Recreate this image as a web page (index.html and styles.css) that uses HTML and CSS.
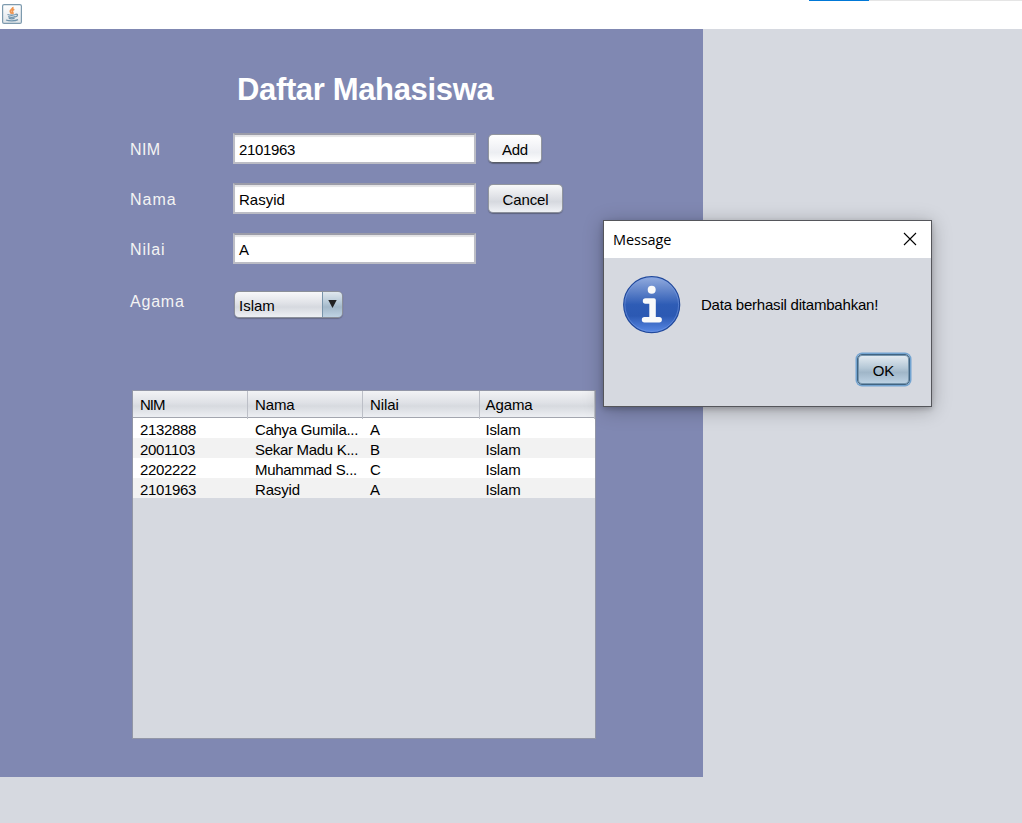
FILE: index.html
```
<!DOCTYPE html>
<html lang="id">
<head>
<meta charset="utf-8">
<title>Daftar Mahasiswa</title>
<link rel="stylesheet" href="styles.css">
</head>
<body>
<header class="titlebar">
  <svg class="java" width="20" height="20" viewBox="0 0 20 20">
    <defs><linearGradient id="jb" x1="0" y1="0" x2="0" y2="1"><stop offset="0" stop-color="#fff"/><stop offset="1" stop-color="#dfe4e8"/></linearGradient></defs>
    <rect x=".6" y=".6" width="18.8" height="18.8" rx="1.5" fill="url(#jb)" stroke="#7d9aae" stroke-width="1.2"/>
    <path d="M10.800 3c.8 2-3 2.800-2.500 4.600.2.900 1 1.400 1.400 2.200M12.300 5.300c-1.900 1-2.600 1.800-1.500 3.200.5.700 0 1.300-.3 1.600" fill="none" stroke="#ef944f" stroke-width="1.700"/>
    <path d="M5.500 10.500c2 .8 6 .8 8.300 0M6.200 12.700c2 .7 5 .7 7 0M13.600 10.200c2.600-.4 2.400 2.200-.4 2.700M6.800 14.400c2 .6 4 .6 5.800 0M4 16c3 1.200 9 1.200 12-.3" fill="none" stroke="#6f93ac" stroke-width="1.300"/>
  </svg>
  <div class="tabstrip"><span class="tab-active"></span></div>
</header>
<main class="panel">
  <h1 class="title">Daftar Mahasiswa</h1>
  <form class="form">
    <div class="row"><span class="label nim">NIM</span><span class="field digits">2101963</span><span class="button add">Add</span></div>
    <div class="row"><span class="label">Nama</span><span class="field">Rasyid</span><span class="button cancel">Cancel</span></div>
    <div class="row"><span class="label nilai">Nilai</span><span class="field">A</span></div>
    <div class="row combo-row"><span class="label agama">Agama</span><span class="combo"><span class="combo-value">Islam</span><span class="combo-arrow"><svg width="9" height="10" viewBox="0 0 9 10"><path d="M.3 1h8.400L4.500 9z" fill="#222"/></svg></span></span></div>
  </form>
  <section class="table">
    <div class="thead"><span class="head-nim">NIM</span><span>Nama</span><span>Nilai</span><span>Agama</span></div>
    <div class="tr"><span class="digits">2132888</span><span class="name-cut">Cahya Gumila...</span><span>A</span><span>Islam</span></div>
    <div class="tr"><span class="digits">2001103</span><span class="name-cut">Sekar Madu K...</span><span>B</span><span>Islam</span></div>
    <div class="tr"><span class="digits">2202222</span><span class="name-cut">Muhammad S...</span><span>C</span><span>Islam</span></div>
    <div class="tr"><span class="digits">2101963</span><span>Rasyid</span><span>A</span><span>Islam</span></div>
  </section>
</main>
<div class="dialog">
  <div class="dialog-title"><span class="dialog-name">Message</span>
    <svg class="close" width="14" height="14" viewBox="0 0 14 14"><path d="M1 1l12 12M13 1L1 13" stroke="#000" stroke-width="1.100"/></svg>
  </div>
  <div class="dialog-body">
    <svg width="58" height="58" viewBox="0 0 58 58">
      <defs><linearGradient id="ib" x1="0" y1="0" x2="0" y2="1"><stop offset="0" stop-color="#94addf"/><stop offset=".1" stop-color="#7f9cd6"/><stop offset=".5" stop-color="#2e5cb5"/><stop offset=".7" stop-color="#2c59b3"/><stop offset="1" stop-color="#5a8ae6"/></linearGradient></defs>
      <circle cx="28.700" cy="28.700" r="28" fill="url(#ib)" stroke="#21499c" stroke-width="1.200"/>
      <circle cx="28.700" cy="28.700" r="26.900" fill="none" stroke="#7ca0e8" stroke-opacity=".5" stroke-width="1"/>
      <circle cx="28.700" cy="13.800" r="4" fill="#fafafa"/>
      <path d="M22.500 22.300h8.600q1.700 0 1.700 1.700v17h3.400a2.600 2.600 0 0 1 0 5.400H21.500a2.600 2.600 0 0 1 0-5.400h4.800V27.700h-3.800a2.600 2.600 0 0 1 0-5.400z" fill="#fafafa"/>
    </svg>
    <span class="message">Data berhasil ditambahkan!</span>
  </div>
  <div class="dialog-actions"><span class="ok">OK</span></div>
</div>
</body>
</html>
```
FILE: styles.css
```
* { box-sizing: border-box; }
body {
  margin: 0;
  width: 1022px;
  height: 823px;
  overflow: hidden;
  background: #d6d9e0;
  color: #000;
  font: 15px/20px "Liberation Sans", Arial, sans-serif;
}
.titlebar { height: 29px; background: #fff; display: flex; justify-content: space-between; padding-left: 2px; }
.java { margin-top: 4px; }
.tabstrip { width: 213px; height: 1px; background: #e5e5e5; display: flex; }
.tab-active { width: 60px; background: #0078d7; }
.panel { width: 703px; height: 748px; background: #8088b2; padding: 41px 0 0 130px; }
.title { margin: 0 0 0 107px; color: #fff; font-size: 31px; line-height: 39px; letter-spacing: -.35px; font-weight: bold; white-space: nowrap; }
.form { margin: 24px 0 0; }
.row { display: flex; align-items: flex-start; height: 50px; }
.label { width: 103px; color: #f4f4f4; font-size: 16px; line-height: 34px; letter-spacing: 1px; }
.nim { letter-spacing: .4px; }
.nilai { letter-spacing: .85px; }
.agama { letter-spacing: .8px; }
.field {
  width: 243px;
  height: 31px;
  background: #fff;
  border: 2px solid #bcbdc5;
  border-top: 2px solid #9b9ca8;
  box-shadow: inset 0 2px 1px #e4e4e6;
  padding: 0 0 0 4px;
  line-height: 30px;
}
.button {
  height: 29px;
  margin: 1px 0 0 12px;
  border: 1px solid #92969e;
  border-bottom-color: #595d67;
  border-radius: 5px;
  background: linear-gradient(#fbfbfc, #e9ebf0 45%, #dfe1e7 62%, #f6f8fc);
  box-shadow: 0 1px 1px #5d637e;
  line-height: 30px;
  text-align: center;
}
.add { width: 54px; letter-spacing: -.3px; background: linear-gradient(#fff, #eff0f4 55%, #eceef2 65%, #fff); }
.cancel { width: 75px; letter-spacing: -.1px; background: linear-gradient(#f8f9fa, #dfe1e6 45%, #d6d9df 62%, #f0f2f6); border-bottom-color: #8c909b; }
.combo-row { height: 107px; padding-top: 8px; }
.combo-row .label { line-height: 21px; }
.combo {
  display: flex;
  width: 109px;
  height: 27px;
  margin: 0 0 0 1px;
  border: 1px solid #8b8f99;
  border-radius: 5px;
  box-shadow: 0 1px 1px #666c88;
  overflow: hidden;
  line-height: 28px;
}
.combo-value { flex: 1; padding-left: 4px; background: linear-gradient(#f8f8fa, #e0e2e7 45%, #d6d9df 60%, #eef0f4); }
.combo-arrow { width: 20px; display: flex; justify-content: center; align-items: center; border-left: 1px solid #7894aa; background: linear-gradient(#e0e8ee, #b3c6d5 45%, #a3b8c9 60%, #bfd3e3); }
.combo-arrow svg { margin-top: -1px; }
.table { width: 464px; height: 349px; margin-left: 2px; border: 1px solid #9296a7; background: #d6d9e0; }
.thead, .tr { display: grid; grid-template-columns: 115px 115px 117px 1fr; }
.thead { height: 27px; line-height: 28px; border-bottom: 1px solid #a3a6af; background: linear-gradient(#f2f3f5, #dfe1e6 45%, #d7dadf 58%, #edeff3); }
.thead span { border-right: 1px solid #bcbfc7; padding-left: 7px; letter-spacing: -.1px; }
.thead .head-nim { letter-spacing: -1.300px; letter-spacing: -1px; }
.tr { height: 20px; line-height: 23px; background: #fff; white-space: nowrap; letter-spacing: -.15px; }
.tr:nth-child(odd) { background: #f2f2f2; }
.tr span { padding-left: 7px; }
.thead span:last-child, .tr span:last-child { padding-left: 5.500px; }
.tr .name-cut { letter-spacing: -.3px; }
.digits { letter-spacing: -.34px; }
.dialog {
  position: absolute;
  left: 603px;
  top: 220px;
  width: 329px;
  height: 187px;
  border: 1px solid #55565b;
  background: #d6d9e0;
  box-shadow: 0 3px 18px rgba(0,0,0,.28), 0 2px 5px rgba(0,0,0,.18);
}
.dialog-title { height: 37px; background: #fff; display: flex; justify-content: space-between; align-items: center; padding: 0 14px 0 9px; }
.dialog-name { font: 14.500px/20px "Open Sans", "Noto Sans", sans-serif; letter-spacing: -.1px; }
.close { margin-bottom: 2px; }
.dialog-body { display: flex; align-items: center; gap: 20px; padding: 18px 0 0 19px; }
.message { white-space: nowrap; letter-spacing: -.21px; }
.dialog-actions { display: flex; justify-content: flex-end; padding: 20px 21px 0 0; }
.ok {
  width: 53px;
  height: 31px;
  border: 1px solid #416482;
  border-radius: 5px;
  background: linear-gradient(#e6edf3, #b4c7d6 45%, #a0b6c8 60%, #bfd4e5);
  box-shadow: inset 0 0 0 1px #7796ae, 0 0 0 1.500px #73a4d1;
  line-height: 31px;
  text-align: center;
}
```
